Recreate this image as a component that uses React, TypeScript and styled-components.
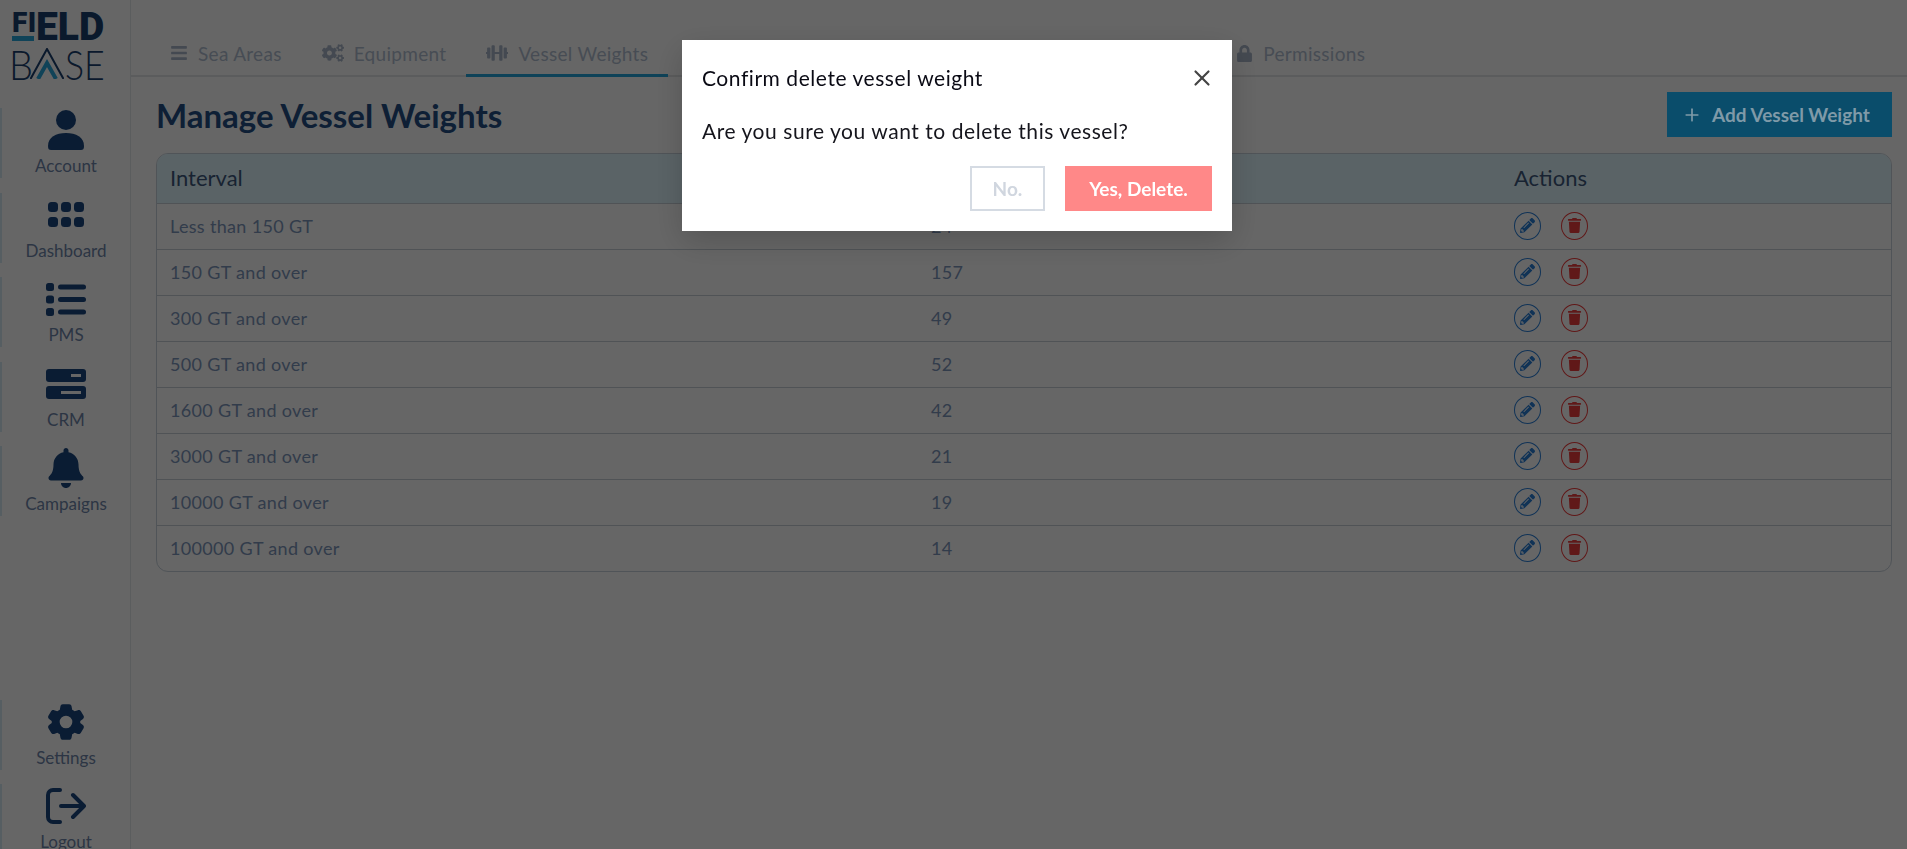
import styled, { createGlobalStyle } from "styled-components";
import { FaBars, FaCogs, FaDumbbell, FaLock, FaPencilAlt, FaTrash, FaBell } from "react-icons/fa";
import { FiPlus, FiX } from "react-icons/fi";

const GlobalStyle = createGlobalStyle`
  * { box-sizing: border-box; }
  html, body { margin: 0; height: 100%; overflow: hidden; background: #fff; }
  body { font-family: "Lato", "Noto Sans", sans-serif; }
`;

const Page = styled.div`
  display: flex;
  height: 849px;
  overflow: hidden;
`;
const Sidebar = styled.aside`
  width: 131px;
  height: 854px;
  flex-shrink: 0;
  display: flex;
  flex-direction: column;
  border-right: 1px solid #e4e8ec;
  padding-top: 13px;
`;
const Logo = styled.div`
  width: 92px;
  height: 65px;
  margin: 0 0 30px 12px;
  color: #1b3f6e;
`;
const LogoTop = styled.div`
  display: flex;
  height: 29px;
  font-family: "Roboto", sans-serif;
  font-weight: 900;
`;
const LogoFi = styled.div`
  width: 24px;
  font-size: 28px;
  line-height: 20px;
  letter-spacing: 0.5px;
  &::after {
    content: "";
    display: block;
    width: 22px;
    height: 5px;
    margin-top: 3px;
    background: #2aa7dc;
  }
`;
const LogoEld = styled.div`
  font-size: 39px;
  line-height: 28px;
`;
const LogoBottom = styled.div`
  display: flex;
  align-items: center;
  height: 31px;
  margin-top: 6px;
  font-family: "Lato", sans-serif;
  font-weight: 300;
  font-size: 42px;
  line-height: 30px;
  svg { flex-shrink: 0; }
`;
const LogoB = styled.span`
  display: inline-block;
  flex-shrink: 0;
  width: 21px;
  margin-left: -3px;
  transform: scaleX(0.9);
  transform-origin: left center;
`;
const LogoSe = styled.span`
  display: inline-block;
  flex-shrink: 0;
  white-space: nowrap;
  margin-left: 1px;
  transform: scaleX(0.85);
  transform-origin: left center;
`;
const NavGroup = styled.nav<{ $bottom?: boolean }>`
  display: flex;
  flex-direction: column;
  gap: ${(p) => (p.$bottom ? "14px" : "14.5px")};
  margin-top: ${(p) => (p.$bottom ? "auto" : "0")};
`;
const NavItem = styled.a`
  height: 70px;
  display: flex;
  flex-direction: column;
  align-items: center;
  border-left: 2px solid #d6ecf6;
  color: #6f86aa;
  font-size: 17px;
  line-height: 20px;
`;
const NavIcon = styled.div`
  height: 44px;
  margin-bottom: 4px;
  display: flex;
  align-items: center;
  justify-content: center;
  color: #194680;
  svg { display: block; }
`;

const Main = styled.main`
  flex: 1;
  min-width: 0;
  padding-top: 30px;
`;
const Tabs = styled.div`
  display: flex;
  height: 47px;
  padding-left: 19px;
  border-bottom: 2px solid #e4e6e8;
`;
const Tab = styled.a<{ $active?: boolean; $offset?: number }>`
  height: 47px;
  display: flex;
  align-items: center;
  gap: 10px;
  padding: 2px 20px 0;
  margin-left: ${(p) => p.$offset ?? 0}px;
  font-size: 19px;
  letter-spacing: 0.3px;
  color: #b2bfd2;
  border-bottom: 3px solid ${(p) => (p.$active ? "#25a5dc" : "transparent")};
  svg { color: #aab7ca; flex-shrink: 0; }
`;
const Content = styled.div`
  padding: 15px 15px 0 25px;
`;
const HeaderRow = styled.div`
  display: flex;
  align-items: center;
  justify-content: space-between;
  height: 45px;
  margin-bottom: 16px;
`;
const Title = styled.h1`
  margin: 0;
  font-size: 33px;
  font-weight: 700;
  color: #234f85;
`;
const AddButton = styled.button`
  position: relative;
  z-index: 11;
  width: 225px;
  height: 45px;
  display: flex;
  align-items: center;
  gap: 10px;
  padding: 0 0 0 15px;
  border: 0;
  background: #0a4d6b;
  color: #7f9aa8;
  font-family: inherit;
  font-size: 19px;
  font-weight: 700;
`;
const Table = styled.div`
  border: 1px solid #c8d2dc;
  border-radius: 12px;
  overflow: hidden;
`;
const Row = styled.div<{ $head?: boolean }>`
  display: grid;
  grid-template-columns: 761px 583px 1fr;
  align-items: center;
  height: ${(p) => (p.$head ? "50px" : "46px")};
  padding-bottom: 2px;
  background: ${(p) => (p.$head ? "#e1f7ff" : "transparent")};
  border-bottom: 1px solid #c8d0d8;
  color: ${(p) => (p.$head ? "#3e577d" : "#7d96bb")};
  font-size: ${(p) => (p.$head ? "22px" : "18px")};
  letter-spacing: ${(p) => (p.$head ? "0" : "0.33px")};
  &:last-child {
    border-bottom: 0;
    height: 45px;
  }
`;
const Cell = styled.div`
  padding-left: 13px;
`;
const Actions = styled.div`
  display: flex;
  gap: 20px;
  padding-left: 13px;
`;
const ActionBtn = styled.span<{ $color: string }>`
  width: 27px;
  height: 28px;
  border-radius: 50%;
  display: flex;
  align-items: center;
  justify-content: center;
  color: ${(p) => p.$color};
  border: 1px solid ${(p) => p.$color};
`;

const Overlay = styled.div`
  position: fixed;
  inset: 0;
  z-index: 10;
  background: rgba(0, 0, 0, 0.6);
  display: flex;
  justify-content: center;
  align-items: flex-start;
  padding: 40px 0 0 7px;
`;
const Modal = styled.div`
  width: 550px;
  height: 191px;
  background: #fff;
  padding: 20px;
  box-shadow: 0 10px 30px rgba(0, 0, 0, 0.18);
`;
const ModalHead = styled.div`
  display: flex;
  align-items: center;
  justify-content: space-between;
  height: 36px;
  padding-bottom: 2px;
  color: #0a0a14;
  font-size: 21px;
  letter-spacing: 0.55px;
  svg { color: #444; margin: 2px -3px 0 0; }
`;
const ModalBody = styled.p`
  margin: 23px 0 0;
  height: 24px;
  line-height: 24px;
  font-size: 21px;
  letter-spacing: 0.55px;
  color: #15151c;
`;
const ModalFooter = styled.div`
  display: flex;
  justify-content: flex-end;
  gap: 20px;
  margin-top: 23px;
`;
const NoButton = styled.button`
  width: 75px;
  height: 45px;
  background: #fff;
  border: 2px solid #d5dbe3;
  color: #d0d6df;
  font-family: inherit;
  font-size: 19px;
  font-weight: 700;
`;
const YesButton = styled.button`
  width: 147px;
  height: 45px;
  background: #ff8888;
  border: 0;
  color: #fff;
  font-family: inherit;
  font-size: 19px;
  font-weight: 700;
`;

const AccountIcon = () => (
  <svg width="36" height="40" viewBox="0 0 36 40" fill="currentColor">
    <circle cx="18" cy="10" r="10" />
    <path d="M0 36c0-9 8-13 18-13s18 4 18 13c0 3-1 4-3 4H3c-2 0-3-1-3-4z" />
  </svg>
);
const GridIcon = () => (
  <svg width="36" height="26" viewBox="0 0 36 26" fill="currentColor">
    {[0, 13, 26].map((x) =>
      [0, 15].map((y) => <rect key={`${x}-${y}`} x={x} y={y} width="10" height="10" rx="3.5" />)
    )}
  </svg>
);
const ListIcon = () => (
  <svg width="40" height="33" viewBox="0 0 40 33" fill="currentColor">
    {[0, 12.5, 25].map((y) => (
      <g key={y}>
        <rect x="0" y={y} width="8" height="8" rx="2.5" />
        <rect x="12" y={y + 1.5} width="28" height="5" rx="2.5" />
      </g>
    ))}
  </svg>
);
const ServerIcon = () => (
  <svg width="40" height="30" viewBox="0 0 40 30">
    <rect width="40" height="13" rx="3" fill="currentColor" />
    <rect y="17" width="40" height="13" rx="3" fill="currentColor" />
    <rect x="25" y="5" width="10" height="3" fill="#fff" />
    <rect x="15" y="22" width="20" height="3" fill="#fff" />
  </svg>
);
const GearIcon = () => (
  <svg width="38" height="40" viewBox="0 0 24 24" fill="currentColor">
    <path
      fillRule="evenodd"
      d="M10 .8c-.8 0-1.4.5-1.5 1.3l-.4 2.1c-.6.3-1.1.6-1.6 1l-2-.7c-.7-.3-1.5 0-1.9.7L.9 8.1c-.4.7-.2 1.5.4 2L3 11.4v1.2l-1.7 1.3c-.6.5-.8 1.3-.4 2l1.7 2.9c.4.7 1.2 1 1.9.7l2-.7c.5.4 1 .7 1.6 1l.4 2.1c.1.8.7 1.3 1.5 1.3h4c.8 0 1.4-.5 1.5-1.3l.4-2.1c.6-.3 1.1-.6 1.6-1l2 .7c.7.3 1.5 0 1.9-.7l1.7-2.9c.4-.7.2-1.5-.4-2L21 12.6v-1.2l1.7-1.3c.6-.5.8-1.3.4-2l-1.7-2.9c-.4-.7-1.2-1-1.9-.7l-2 .7c-.5-.4-1-.7-1.6-1l-.4-2.1C15.4 1.3 14.8.8 14 .8h-4zM12 8a4 4 0 110 8 4 4 0 010-8z"
    />
  </svg>
);
const LogoutIcon = () => (
  <svg width="40" height="36" viewBox="0 0 40 36" fill="none" stroke="currentColor" strokeWidth="4" strokeLinecap="round" strokeLinejoin="round">
    <path d="M14 2H7a5 5 0 00-5 5v22a5 5 0 005 5h7" />
    <path d="M15 18h23M27 7l11 11-11 11" />
  </svg>
);
const LogoChevron = () => (
  <svg width="34" height="31" viewBox="0 0 34 31" fill="none">
    <path d="M0.5 31 17 1l16.5 30" stroke="#1b3f6e" strokeWidth="2" />
    <path d="M8 31 17 15l9 16" stroke="#2aa7dc" strokeWidth="4" />
  </svg>
);

const navTop = [
  { label: "Account", icon: <AccountIcon /> },
  { label: "Dashboard", icon: <GridIcon /> },
  { label: "PMS", icon: <ListIcon /> },
  { label: "CRM", icon: <ServerIcon /> },
  { label: "Campaigns", icon: <FaBell size={40} /> },
];
const navBottom = [
  { label: "Settings", icon: <GearIcon /> },
  { label: "Logout", icon: <LogoutIcon /> },
];
const weights = [
  ["Less than 150 GT", "24"],
  ["150 GT and over", "157"],
  ["300 GT and over", "49"],
  ["500 GT and over", "52"],
  ["1600 GT and over", "42"],
  ["3000 GT and over", "21"],
  ["10000 GT and over", "19"],
  ["100000 GT and over", "14"],
];

function App() {
  return (
    <>
      <GlobalStyle />
      <Page>
        <Sidebar>
          <Logo>
            <LogoTop>
              <LogoFi>FI</LogoFi>
              <LogoEld>ELD</LogoEld>
            </LogoTop>
            <LogoBottom>
              <LogoB>B</LogoB>
              <LogoChevron />
              <LogoSe>SE</LogoSe>
            </LogoBottom>
          </Logo>
          <NavGroup>
            {navTop.map((n) => (
              <NavItem key={n.label}>
                <NavIcon>{n.icon}</NavIcon>
                {n.label}
              </NavItem>
            ))}
          </NavGroup>
          <NavGroup $bottom>
            {navBottom.map((n) => (
              <NavItem key={n.label}>
                <NavIcon>{n.icon}</NavIcon>
                {n.label}
              </NavItem>
            ))}
          </NavGroup>
        </Sidebar>
        <Main>
          <Tabs>
            <Tab><FaBars size={18} />Sea Areas</Tab>
            <Tab><FaCogs size={22} />Equipment</Tab>
            <Tab $active><FaDumbbell size={22} />Vessel Weights</Tab>
            <Tab $offset={548}><FaLock size={17} />Permissions</Tab>
          </Tabs>
          <Content>
            <HeaderRow>
              <Title>Manage Vessel Weights</Title>
              <AddButton><FiPlus size={20} />Add Vessel Weight</AddButton>
            </HeaderRow>
            <Table>
              <Row $head>
                <Cell>Interval</Cell>
                <Cell />
                <Cell>Actions</Cell>
              </Row>
              {weights.map(([interval, count]) => (
                <Row key={interval}>
                  <Cell>{interval}</Cell>
                  <Cell>{count}</Cell>
                  <Actions>
                    <ActionBtn $color="#2a7fd8"><FaPencilAlt size={15} /></ActionBtn>
                    <ActionBtn $color="#f03c3c"><FaTrash size={15} /></ActionBtn>
                  </Actions>
                </Row>
              ))}
            </Table>
          </Content>
        </Main>
      </Page>
      <Overlay>
        <Modal>
          <ModalHead>
            Confirm delete vessel weight
            <FiX size={26} />
          </ModalHead>
          <ModalBody>Are you sure you want to delete this vessel?</ModalBody>
          <ModalFooter>
            <NoButton>No.</NoButton>
            <YesButton>Yes, Delete.</YesButton>
          </ModalFooter>
        </Modal>
      </Overlay>
    </>
  );
}

export default App;
